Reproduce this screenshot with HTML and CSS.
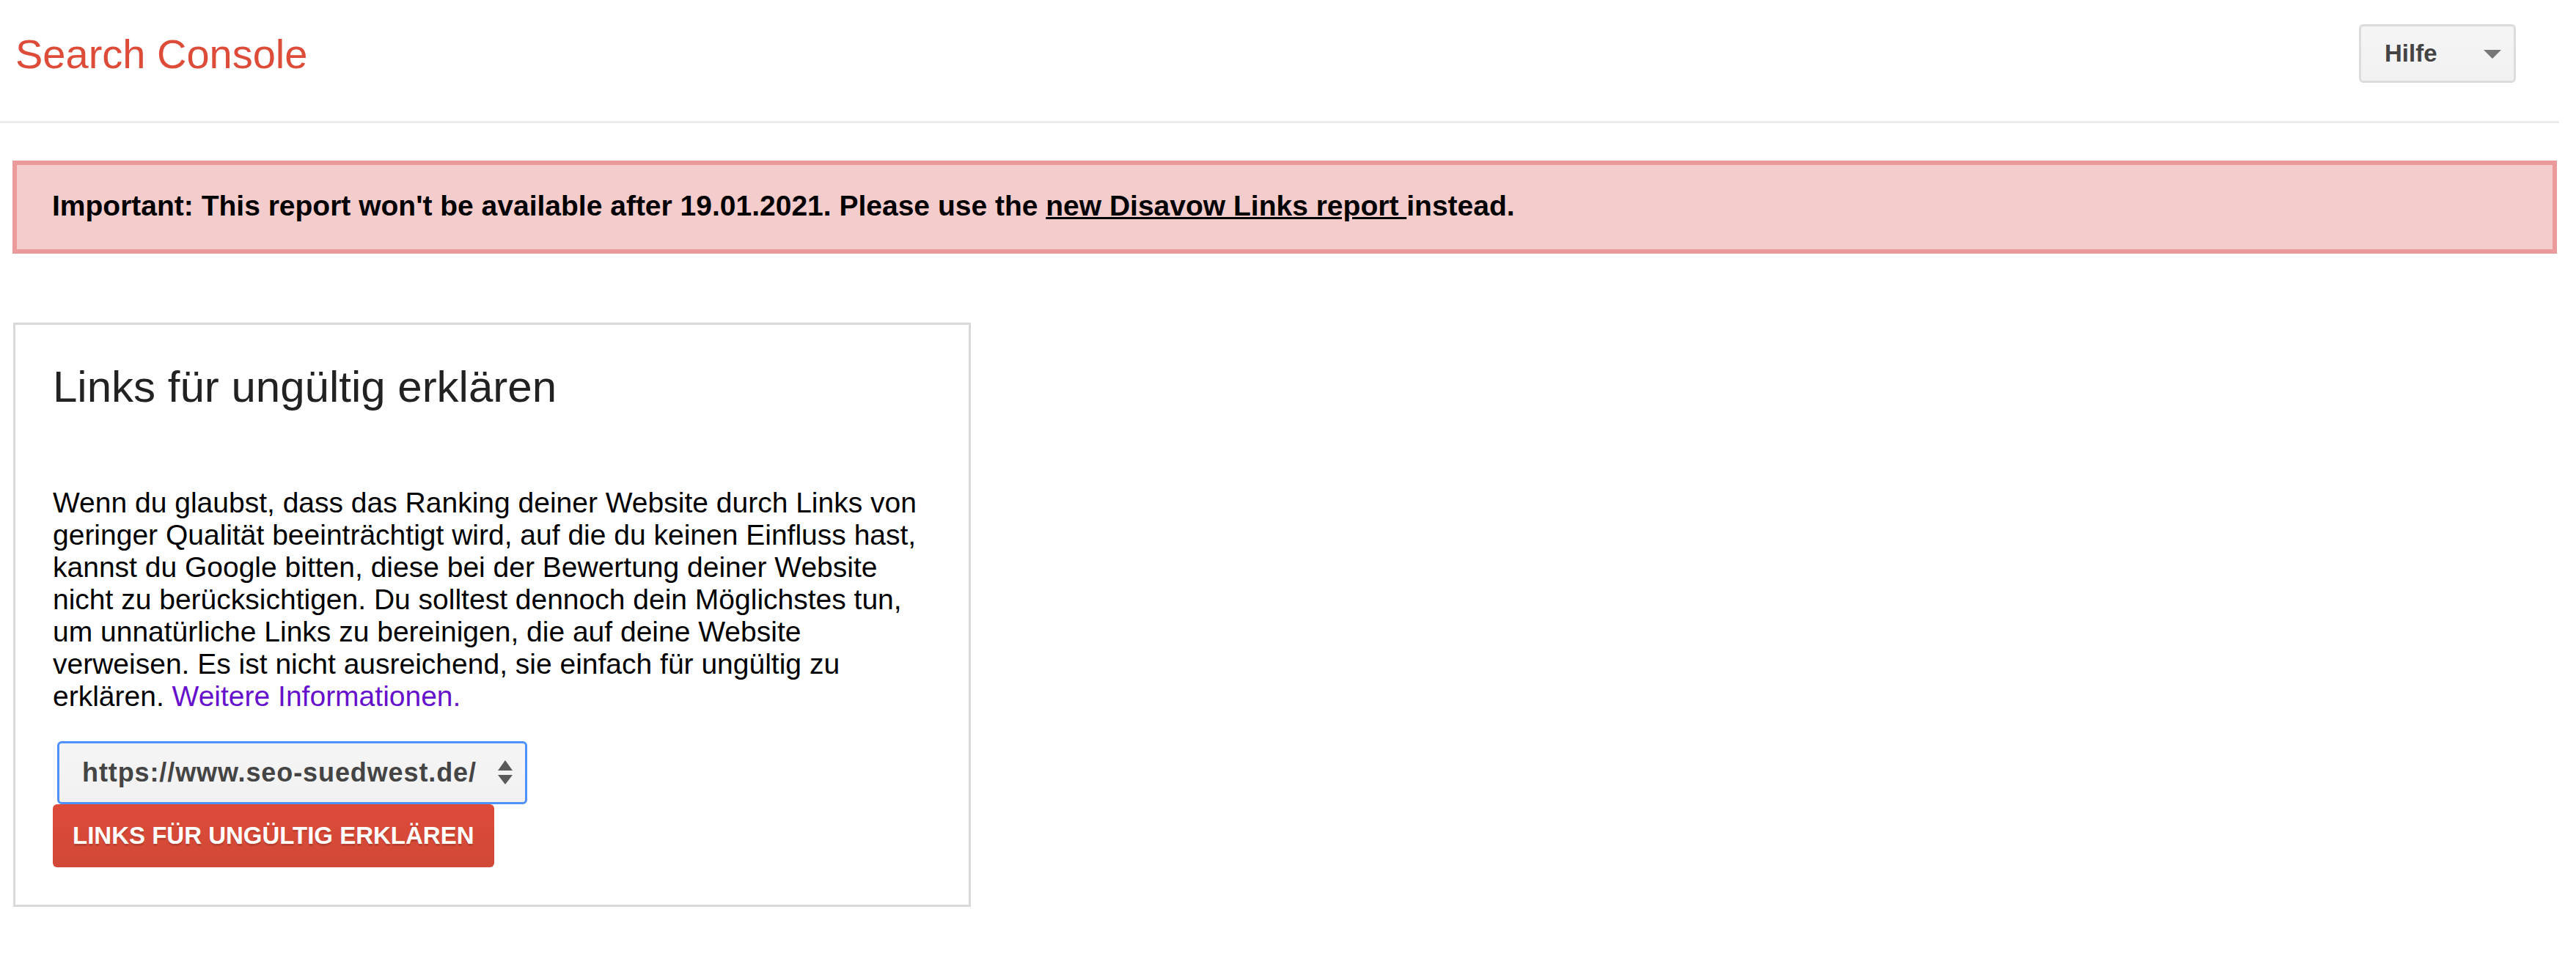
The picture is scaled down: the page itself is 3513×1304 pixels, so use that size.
FILE: index.html
```html
<!DOCTYPE html>
<html lang="de">
<head>
<meta charset="utf-8">
<title>Search Console</title>
<link rel="stylesheet" href="styles.css">
</head>
<body>
<div class="page">
  <header class="topbar">
    <div class="logo">Search Console</div>
    <div class="help-btn">
      <span class="help-label">Hilfe</span>
      <svg class="help-caret" width="24" height="12" viewBox="0 0 24 12"><path d="M0 0 H24 L12 12 Z" fill="#777"/></svg>
    </div>
  </header>

  <div class="alert">Important: This report won't be available after 19.01.2021. Please use the <a class="alert-link" href="#">new Disavow Links report </a>instead.</div>

  <section class="card">
    <h1 class="card-title">Links für ungültig erklären</h1>
    <p class="card-text">Wenn du glaubst, dass das Ranking deiner Website durch Links von geringer Qualität beeinträchtigt wird, auf die du keinen Einfluss hast, kannst du Google bitten, diese bei der Bewertung deiner Website nicht zu berücksichtigen. Du solltest dennoch dein Möglichstes tun, um unnatürliche Links zu bereinigen, die auf deine Website verweisen. Es ist nicht ausreichend, sie einfach für ungültig zu erklären. <a class="more-link" href="#">Weitere Informationen.</a></p>
    <div class="site-select">
      <span class="site-value">https://www.seo-suedwest.de/</span>
      <svg class="spinner" width="22" height="34" viewBox="0 0 22 34"><path d="M11 0 L21 14 H1 Z" fill="#5a5a5a"/><path d="M1 20 H21 L11 33 Z" fill="#5a5a5a"/></svg>
    </div>
    <div class="primary-btn">Links für ungültig erklären</div>
  </section>
</div>
</body>
</html>
```

FILE: styles.css
```css
html, body {
  margin: 0;
  padding: 0;
  background: #fff;
}

body {
  font-family: "Liberation Sans", Arial, sans-serif;
  color: #000;
}

.page {
  padding-right: 23px;
}

.topbar {
  display: flex;
  justify-content: space-between;
  align-items: flex-start;
  height: 165px;
  padding: 0 59px 0 21px;
  border-bottom: 3px solid #ebebeb;
}

.logo {
  padding-top: 41px;
  font-size: 56px;
  color: #dd4b39;
}

.help-btn {
  margin-top: 33px;
  box-sizing: border-box;
  width: 214px;
  height: 80px;
  display: flex;
  align-items: center;
  justify-content: space-between;
  padding: 0 17px 0 32px;
  border: 3px solid #dcdcdc;
  border-radius: 6px;
  background: linear-gradient(#f5f5f5, #f1f1f1);
}

.help-label {
  font-size: 33px;
  font-weight: bold;
  color: #444;
}

.help-caret {
  display: block;
  margin-top: 2px;
}

.alert {
  margin: 51px 3px 0 17px;
  padding: 34px 48px 37px;
  border: 6px solid #ea9a9a;
  background: #f4cccc;
  font-size: 39px;
  font-weight: bold;
  color: #000;
}

.alert-link {
  color: #000;
  text-decoration: underline;
}

.card {
  margin: 94px 0 0 18px;
  width: 1198px;
  padding: 50px 51px 51px;
  border: 3px solid #d9d9d9;
}

.card-title {
  margin: 0 0 102px;
  font-size: 60px;
  font-weight: normal;
  color: #222;
}

.card-text {
  margin: 0 0 39px;
  font-size: 39px;
  line-height: 44px;
  color: #000;
}

.more-link {
  color: #6611cc;
  text-decoration: none;
}

.site-select {
  box-sizing: border-box;
  width: 641px;
  height: 86px;
  margin-left: 6px;
  display: flex;
  align-items: center;
  justify-content: space-between;
  padding: 0 16px 0 31px;
  border: 3px solid #4d90fe;
  border-radius: 6px;
  background: linear-gradient(#f5f5f5, #f1f1f1);
}

.site-value {
  font-size: 36px;
  font-weight: bold;
  letter-spacing: 0.9px;
  color: #444;
}

.spinner {
  display: block;
}

.primary-btn {
  display: inline-flex;
  align-items: center;
  box-sizing: border-box;
  height: 86px;
  padding: 0 27px;
  border-radius: 6px;
  background: linear-gradient(#dd4b39, #d14836);
  color: #fff;
  font-size: 33px;
  font-weight: bold;
  text-transform: uppercase;
  text-shadow: 0 3px 0 rgba(0, 0, 0, 0.15);
}
```
